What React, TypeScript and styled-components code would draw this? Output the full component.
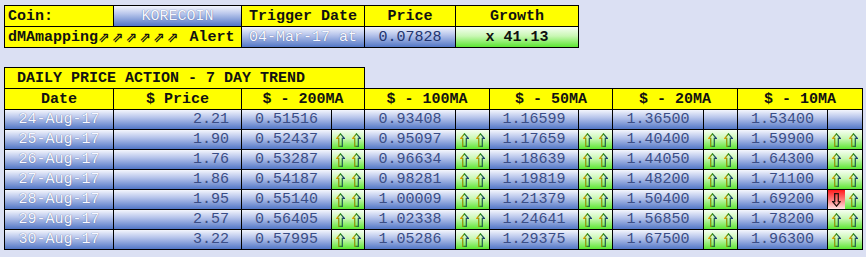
import * as React from 'react';
import { useId } from 'react';
import styled, { createGlobalStyle } from 'styled-components';

const GlobalStyle = createGlobalStyle`
    html, body {
        margin: 0;
        padding: 0;
        background: #dbe0f3;
    }
    body {
        font-family: 'Liberation Mono', 'Courier New', monospace;
        font-size: 15px;
    }
`;

const blue = 'linear-gradient(#f3f5fc 0%, #bac7ec 38%, #5377c6 100%)';
const green = 'linear-gradient(#f6fff2 0%, #c9f7b4 45%, #5ce632 100%)';
const red = 'linear-gradient(#ff1c1c 0%, #ff7a7a 50%, #ffe6e6 100%)';

const Page = styled.div`
    width: 866px;
    height: 257px;
    box-sizing: border-box;
    padding: 5px 0 0 4px;
    display: flex;
    flex-direction: column;
    align-items: flex-start;
`;

const TopGrid = styled.div`
    display: grid;
    grid-template-columns: 108px 127px 122px 90px 122px;
    grid-auto-rows: 20px;
    gap: 1px;
    padding: 1px;
    background: #000;
`;

type Tone = 'yellow' | 'blue' | 'green' | 'red';

const bg = (t: Tone) =>
    t === 'yellow' ? '#ffff00' : t === 'blue' ? blue : t === 'green' ? green : red;

interface CellProps {
    $tone: Tone;
    $align?: 'left' | 'center' | 'right';
    $bold?: boolean;
    $ink?: string;
    $span?: number;
    $glow?: boolean;
}

const Cell = styled.div<CellProps>`
    display: flex;
    align-items: center;
    justify-content: ${(p) =>
        p.$align === 'left' ? 'flex-start' : p.$align === 'right' ? 'flex-end' : 'center'};
    padding: ${(p) => (p.$align === 'left' ? '0 0 0 3px' : p.$align === 'right' ? '0 12px 0 0' : '0')};
    background: ${(p) => bg(p.$tone)};
    color: ${(p) => p.$ink || '#111'};
    font-weight: ${(p) => (p.$bold ? 700 : 400)};
    text-shadow: ${(p) => (p.$glow ? '0 0 1px rgba(50, 70, 130, 0.9)' : 'none')};
    white-space: pre;
    overflow: hidden;
    grid-column: ${(p) => (p.$span ? `span ${p.$span}` : 'auto')};
    line-height: 1;
`;

const Arrows = styled.span`
    font-family: 'DejaVu Sans', sans-serif;
    font-size: 14px;
    font-weight: 700;
    letter-spacing: 2px;
`;

const Title = styled.div`
    margin-top: 19px;
    width: 361px;
    height: 21px;
    box-sizing: border-box;
    border: 1px solid #000;
    border-bottom: 0;
    background: #ffff00;
    color: #111;
    font-weight: 700;
    display: flex;
    align-items: center;
    padding-left: 12px;
    white-space: pre;
`;

const TrendGrid = styled.div`
    display: grid;
    grid-template-columns: 108px 127px 89px 32px 90px 33px 88px 33px 90px 33px 89px 34px;
    grid-template-rows: 20px;
    grid-auto-rows: 19px;
    gap: 1px;
    padding: 1px;
    background: #000;
`;

const SignalCell = styled.div`
    display: flex;
`;

const SignalHalf = styled.div<{ $tone: Tone }>`
    flex: 1;
    display: flex;
    align-items: center;
    justify-content: center;
    background: ${(p) => bg(p.$tone)};
`;

const Arrow: React.FC<{ down?: boolean }> = ({ down }) => {
    const id = useId().replace(/:/g, '');
    return (
        <svg width="9" height="14" viewBox="0 0 9 14">
            <defs>
                <linearGradient id={id} x1="0" y1="0" x2="1" y2="0">
                    {down ? (
                        <>
                            <stop offset="0" stopColor="#3a1a10" />
                            <stop offset="1" stopColor="#1a1010" />
                        </>
                    ) : (
                        <>
                            <stop offset="0" stopColor="#f0a000" />
                            <stop offset="0.5" stopColor="#2f8f1f" />
                            <stop offset="1" stopColor="#1c2f86" />
                        </>
                    )}
                </linearGradient>
            </defs>
            <g transform={down ? 'rotate(180 4.5 7)' : undefined}>
                <path
                    d="M4.5 0.8 L8.3 5.4 L6.3 5.4 L6.3 13.3 L2.7 13.3 L2.7 5.4 L0.7 5.4 Z"
                    fill="none"
                    stroke={`url(#${id})`}
                    strokeWidth="1.3"
                />
            </g>
        </svg>
    );
};

type Sig = 'up' | 'down';
interface MA {
    v: string;
    s?: [Sig, Sig];
}
interface Row {
    date: string;
    price: string;
    ma: MA[];
}

const uu: [Sig, Sig] = ['up', 'up'];

const rows: Row[] = [
    { date: '24-Aug-17', price: '2.21', ma: [{ v: '0.51516' }, { v: '0.93408' }, { v: '1.16599' }, { v: '1.36500' }, { v: '1.53400' }] },
    { date: '25-Aug-17', price: '1.90', ma: [{ v: '0.52437', s: uu }, { v: '0.95097', s: uu }, { v: '1.17659', s: uu }, { v: '1.40400', s: uu }, { v: '1.59900', s: uu }] },
    { date: '26-Aug-17', price: '1.76', ma: [{ v: '0.53287', s: uu }, { v: '0.96634', s: uu }, { v: '1.18639', s: uu }, { v: '1.44050', s: uu }, { v: '1.64300', s: uu }] },
    { date: '27-Aug-17', price: '1.86', ma: [{ v: '0.54187', s: uu }, { v: '0.98281', s: uu }, { v: '1.19819', s: uu }, { v: '1.48200', s: uu }, { v: '1.71100', s: uu }] },
    { date: '28-Aug-17', price: '1.95', ma: [{ v: '0.55140', s: uu }, { v: '1.00009', s: uu }, { v: '1.21379', s: uu }, { v: '1.50400', s: uu }, { v: '1.69200', s: ['down', 'up'] }] },
    { date: '29-Aug-17', price: '2.57', ma: [{ v: '0.56405', s: uu }, { v: '1.02338', s: uu }, { v: '1.24641', s: uu }, { v: '1.56850', s: uu }, { v: '1.78200', s: uu }] },
    { date: '30-Aug-17', price: '3.22', ma: [{ v: '0.57995', s: uu }, { v: '1.05286', s: uu }, { v: '1.29375', s: uu }, { v: '1.67500', s: uu }, { v: '1.96300', s: uu }] },
];

const maHeads = ['$ - 200MA', '$ - 100MA', '$ - 50MA', '$ - 20MA', '$ - 10MA'];
const numInk = '#3a4d86';
const lightInk = '#f8f9ff';

const App: React.FC = () => (
    <Page>
        <GlobalStyle />
        <TopGrid>
            <Cell $tone="yellow" $align="left" $bold>Coin:</Cell>
            <Cell $tone="blue" $ink={lightInk} $glow>KORECOIN</Cell>
            <Cell $tone="yellow" $bold>Trigger Date</Cell>
            <Cell $tone="yellow" $bold>Price</Cell>
            <Cell $tone="yellow" $bold>Growth</Cell>
            <Cell $tone="yellow" $align="left" $bold $span={2}>
                dMAmapping<Arrows>⇗⇗⇗⇗⇗⇗</Arrows> Alert
            </Cell>
            <Cell $tone="blue" $ink={lightInk} $glow>04-Mar-17 at</Cell>
            <Cell $tone="blue" $ink="#22346e">0.07828</Cell>
            <Cell $tone="green" $bold>x 41.13</Cell>
        </TopGrid>

        <Title>DAILY PRICE ACTION - 7 DAY TREND</Title>
        <TrendGrid>
            <Cell $tone="yellow" $bold>Date</Cell>
            <Cell $tone="yellow" $bold>$ Price</Cell>
            {maHeads.map((h) => (
                <Cell key={h} $tone="yellow" $bold $span={2}>{h}</Cell>
            ))}
            {rows.map((r) => (
                <React.Fragment key={r.date}>
                    <Cell $tone="blue" $ink={lightInk} $glow>{r.date}</Cell>
                    <Cell $tone="blue" $align="right" $ink={numInk}>{r.price}</Cell>
                    {r.ma.map((m, i) => (
                        <React.Fragment key={i}>
                            <Cell $tone="blue" $ink={numInk}>{m.v}</Cell>
                            {m.s ? (
                                <SignalCell>
                                    {m.s.map((s, j) => (
                                        <SignalHalf key={j} $tone={s === 'down' ? 'red' : 'green'}>
                                            <Arrow down={s === 'down'} />
                                        </SignalHalf>
                                    ))}
                                </SignalCell>
                            ) : (
                                <Cell $tone="blue" />
                            )}
                        </React.Fragment>
                    ))}
                </React.Fragment>
            ))}
        </TrendGrid>
    </Page>
);

export default App;
